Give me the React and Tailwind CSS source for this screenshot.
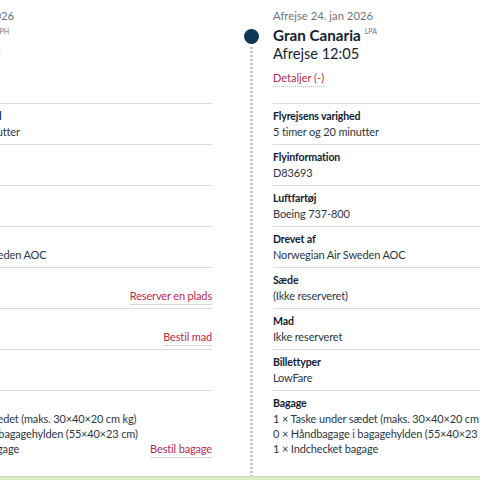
import React from 'react';

const outbound = {
  date: 'Afrejse 17. jan 2026',
  city: 'København',
  code: 'CPH',
  time: 'Afrejse 07:10',
  rows: [
    { label: 'Flyrejsens varighed', value: ['5 timer og 20 minutter'] },
    { label: 'Flyinformation', value: ['D83692'] },
    { label: 'Luftfartøj', value: ['Boeing 737-800'] },
    { label: 'Drevet af', value: ['Norwegian Air Sweden AOC'] },
    { label: 'Sæde', value: ['(Ikke reserveret)'], link: 'Reserver en plads' },
    { label: 'Mad', value: ['Ikke reserveret'], link: 'Bestil mad' },
    { label: 'Billettyper', value: ['LowFare'] },
    {
      label: 'Bagage',
      value: [
        '1 × Taske under sædet (maks. 30×40×20 cm kg)',
        '0 × Håndbagage i bagagehylden (55×40×23 cm)',
        '1 × Indchecket bagage',
      ],
      link: 'Bestil bagage',
    },
  ],
};

const inbound = {
  ...outbound,
  date: 'Afrejse 24. jan 2026',
  city: 'Gran Canaria',
  code: 'LPA',
  time: 'Afrejse 12:05',
  rows: outbound.rows.map((r) =>
    r.label === 'Flyinformation' ? { ...r, value: ['D83693'] } : r
  ),
};

const Row = ({ row }) => {
  const last = row.value.length - 1;
  return (
    <div className="border-t border-[#d9dbdd] pt-[5px] pb-[5px]">
      <div className="text-[10.6px] leading-[15px] font-bold tracking-[-0.15px] text-[#132233]">{row.label}</div>
      {row.value.map((line, i) => (
        <div key={i} className="flex justify-between text-[11px] leading-[15px] tracking-[-0.15px] text-[#2c3744]">
          <span className="whitespace-nowrap">{line}</span>
          {row.link && i === last && (
            <span className="whitespace-nowrap text-[#b52a50] underline decoration-[#d6d6d6] underline-offset-[4px]">
              {row.link}
            </span>
          )}
        </div>
      ))}
    </div>
  );
};

const Leg = ({ leg }) => (
  <div className="w-[298px] shrink-0 pt-[8px]">
    <div className="text-[11.3px] leading-[16px] text-[#6f7479]">{leg.date}</div>
    <div className="mt-[1px] h-[20px] text-[15.2px] leading-[20px] font-bold text-[#132233] whitespace-nowrap">
      {leg.city}
      <sup className="ml-[4px] top-[-7px] text-[7px] font-normal text-[#6f7479]">{leg.code}</sup>
    </div>
    <div className="text-[14.6px] leading-[18px] text-[#132233]">{leg.time}</div>
    <div className="mt-[7px] mb-[17px] h-[16px] text-[11px] leading-[16px]">
      <span className="text-[#b52a50] underline decoration-dotted decoration-[#bdbdbd] underline-offset-[4px]">
        Detaljer (-)
      </span>
    </div>
    {leg.rows.map((r) => (
      <Row key={r.label} row={r} />
    ))}
  </div>
);

export default function App() {
  return (
    <div
      className="w-[480px] h-[480px] overflow-hidden bg-white flex flex-col"
      style={{ fontFamily: 'Lato, "Open Sans", sans-serif' }}
    >
      <div className="flex flex-1 ml-[-86px] min-h-0">
        <Leg leg={outbound} />
        <div className="w-[61px] shrink-0 flex flex-col pt-[29px] pl-[32px]">
          <div className="w-[15px] h-[15px] rounded-full bg-[#0d3657]" />
          <div className="flex-1 ml-[6px] w-[3px] mt-[2px] bg-[radial-gradient(circle,#c5c9cc_1.2px,transparent_1.4px)] bg-[length:3px_4px]" />
        </div>
        <Leg leg={inbound} />
      </div>
      <div className="h-[4px] border-t border-[#cfd6c6] bg-[#dcedc6]" />
    </div>
  );
}
